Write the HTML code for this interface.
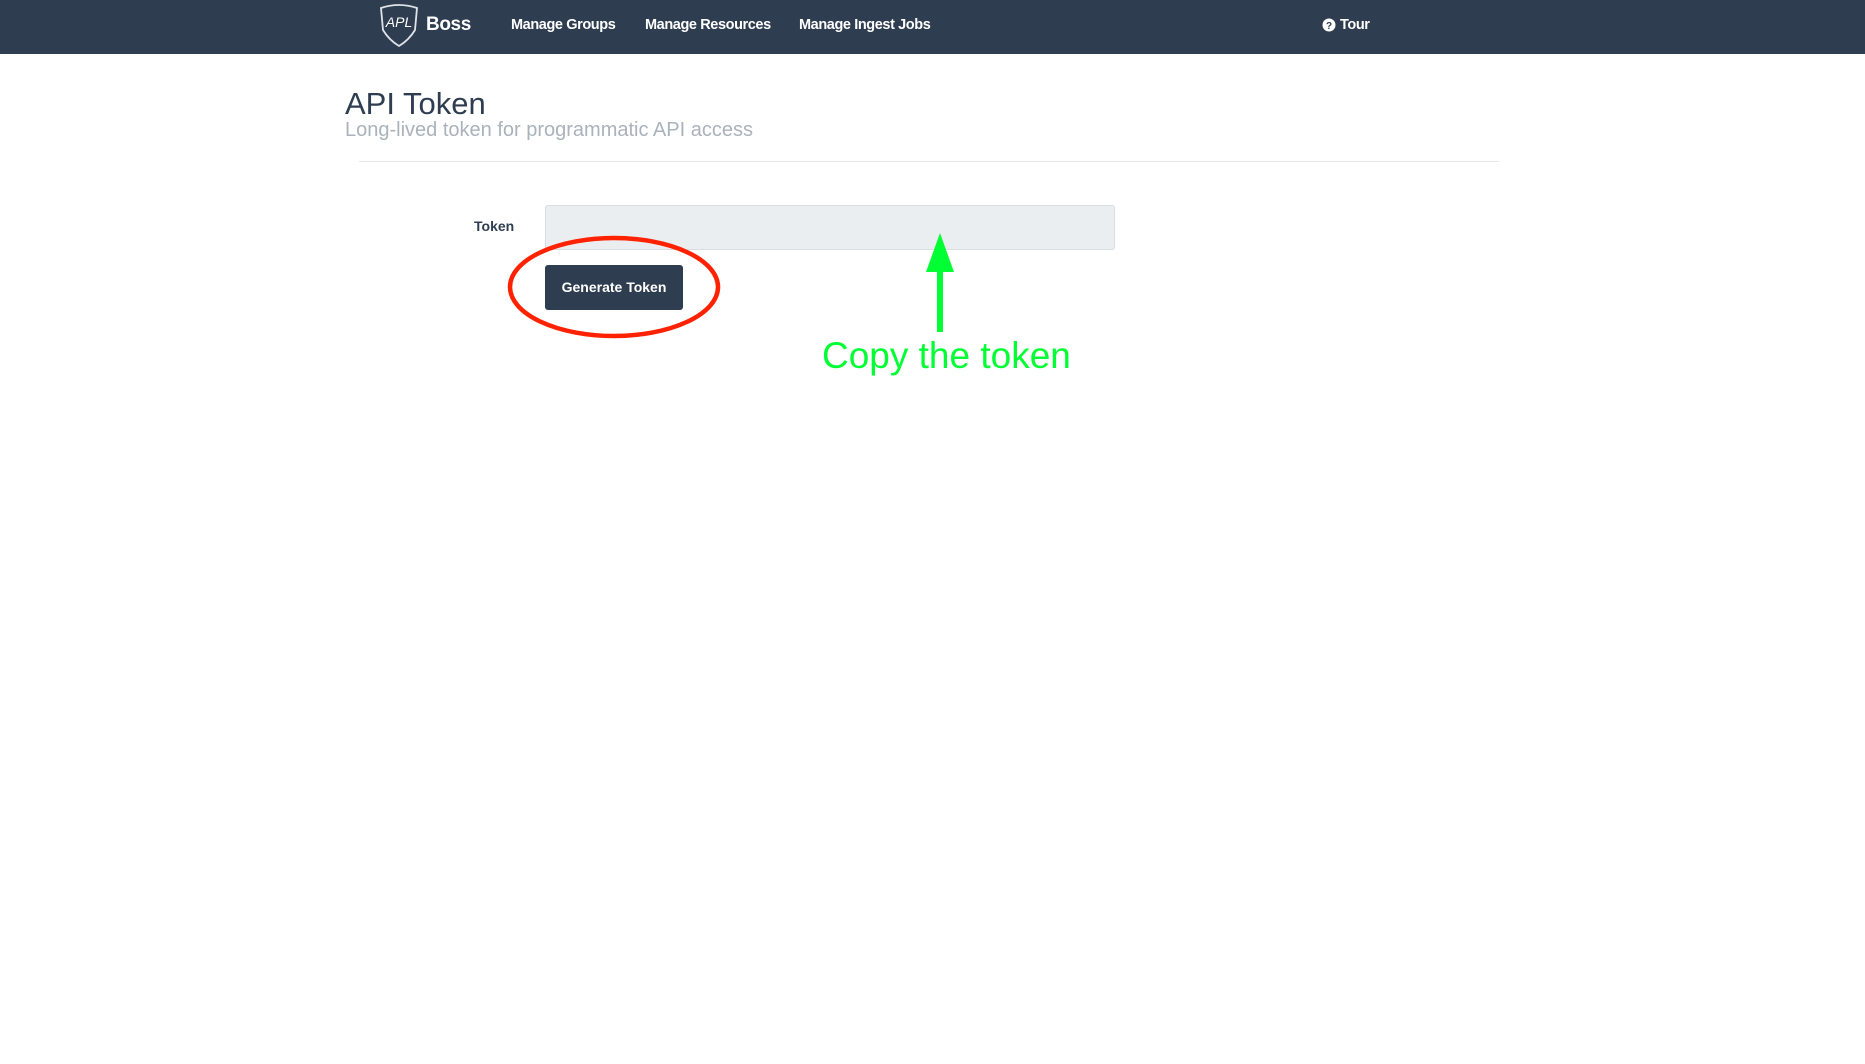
<!DOCTYPE html>
<html><head><meta charset="utf-8"><style>
body{margin:0;width:1865px;height:1064px;background:#fff;font-family:"Liberation Sans",sans-serif;position:relative;overflow:hidden}
.nav{position:absolute;left:0;top:0;width:1865px;height:54px;background:#2e3d50}
.nav span{position:absolute;top:17px;color:#fff;font-size:14.5px;font-weight:bold;letter-spacing:-0.4px}
.a{position:absolute}
</style></head><body>
<div class="nav">
<svg class="a" style="left:377px;top:4px" width="44" height="44" viewBox="0 0 44 44"><path d="M4 4 Q22 -2 40 4 L38 26 Q32 36 22 42 Q12 36 6 26 Z" fill="none" stroke="#dfe3e8" stroke-width="1.8"/><text x="22" y="23" fill="#fff" font-size="14" text-anchor="middle" font-family="Liberation Sans" font-style="italic">APL</text></svg>
<span style="left:426px;top:14px;font-size:19px">Boss</span>
<span style="left:511px">Manage Groups</span>
<span style="left:645px">Manage Resources</span>
<span style="left:799px">Manage Ingest Jobs</span>
<svg class="a" style="left:1322px;top:18px" width="14" height="14" viewBox="0 0 14 14"><circle cx="7" cy="7" r="6.5" fill="#fff"/><text x="7" y="11" font-size="10" font-weight="bold" text-anchor="middle" fill="#2e3d50" font-family="Liberation Sans">?</text></svg>
<span style="left:1340px">Tour</span>
</div>
<div class="a" style="left:345px;top:86px;font-size:31px;color:#2e3d50">API Token</div>
<div class="a" style="left:345px;top:119px;font-size:20px;color:#aab2bb">Long-lived token for programmatic API access</div>
<div class="a" style="left:359px;top:161px;width:1140px;height:1px;background:#e6e8ea"></div>
<div class="a" style="left:474px;top:218px;font-size:14px;font-weight:bold;color:#2e3d50">Token</div>
<div class="a" style="left:545px;top:205px;width:568px;height:43px;background:#ebeef0;border:1px solid #d8dee4;border-radius:3px"></div>
<div class="a" style="left:545px;top:265px;width:138px;height:45px;background:#2e3d50;border-radius:3px;color:#fff;font-size:14px;font-weight:bold;line-height:45px;text-align:center">Generate Token</div>
<svg class="a" style="left:0;top:0" width="1865" height="400">
<ellipse cx="614" cy="287" rx="104" ry="49" fill="none" stroke="#ff2200" stroke-width="4.5"/>
<polygon points="940,233 926,272 954,272" fill="#00ff33"/>
<rect x="937" y="270" width="6" height="62" fill="#00ff33"/>
<text x="822" y="368" font-size="37" fill="#00ff33" font-family="Liberation Sans">Copy the token</text>
</svg>
</body></html>
